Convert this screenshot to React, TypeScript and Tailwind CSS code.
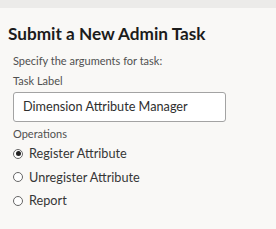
export default function App() {
  const options = ["Register Attribute", "Unregister Attribute", "Report"]
  const selected = 0

  return (
    <div className="w-[276px] h-[229px] bg-[#f9f8f6] overflow-hidden" style={{ fontFamily: 'Lato, "Open Sans", sans-serif' }}>
      <div className="h-[8px] bg-[#ecebe9]" />
      <div className="pl-[8px] pt-[16px]">
        <h1 className="text-[17.2px] leading-[20px] font-bold text-[#1c1c1c]">Submit a New Admin Task</h1>
        <div className="pl-[5px]">
          <p className="mt-[10px] text-[11px] leading-[14px] text-[#505050]">Specify the arguments for task:</p>
          <p className="mt-[6px] text-[11px] leading-[14px] text-[#505050]">Task Label</p>
          <div className="mt-[4px] w-[213px] h-[30px] border border-[#a3a3a3] rounded-[3px] bg-white flex items-center pl-[9px]">
            <span className="text-[12.7px] text-[#2e2e2e]">Dimension Attribute Manager</span>
          </div>
          <p className="mt-[5px] text-[11px] leading-[14px] text-[#505050]">Operations</p>
          <div className="flex flex-col pt-px">
            {options.map((o, i) => (
              <label key={o} className="flex items-center h-[23.6px]">
                <span className="w-[10px] h-[10px] rounded-full border border-[#666] flex items-center justify-center mr-[6px] bg-white">
                  {i === selected && <span className="w-[5px] h-[5px] rounded-full bg-[#222]" />}
                </span>
                <span className="text-[12.7px] text-[#363636]">{o}</span>
              </label>
            ))}
          </div>
        </div>
      </div>
    </div>
  )
}
